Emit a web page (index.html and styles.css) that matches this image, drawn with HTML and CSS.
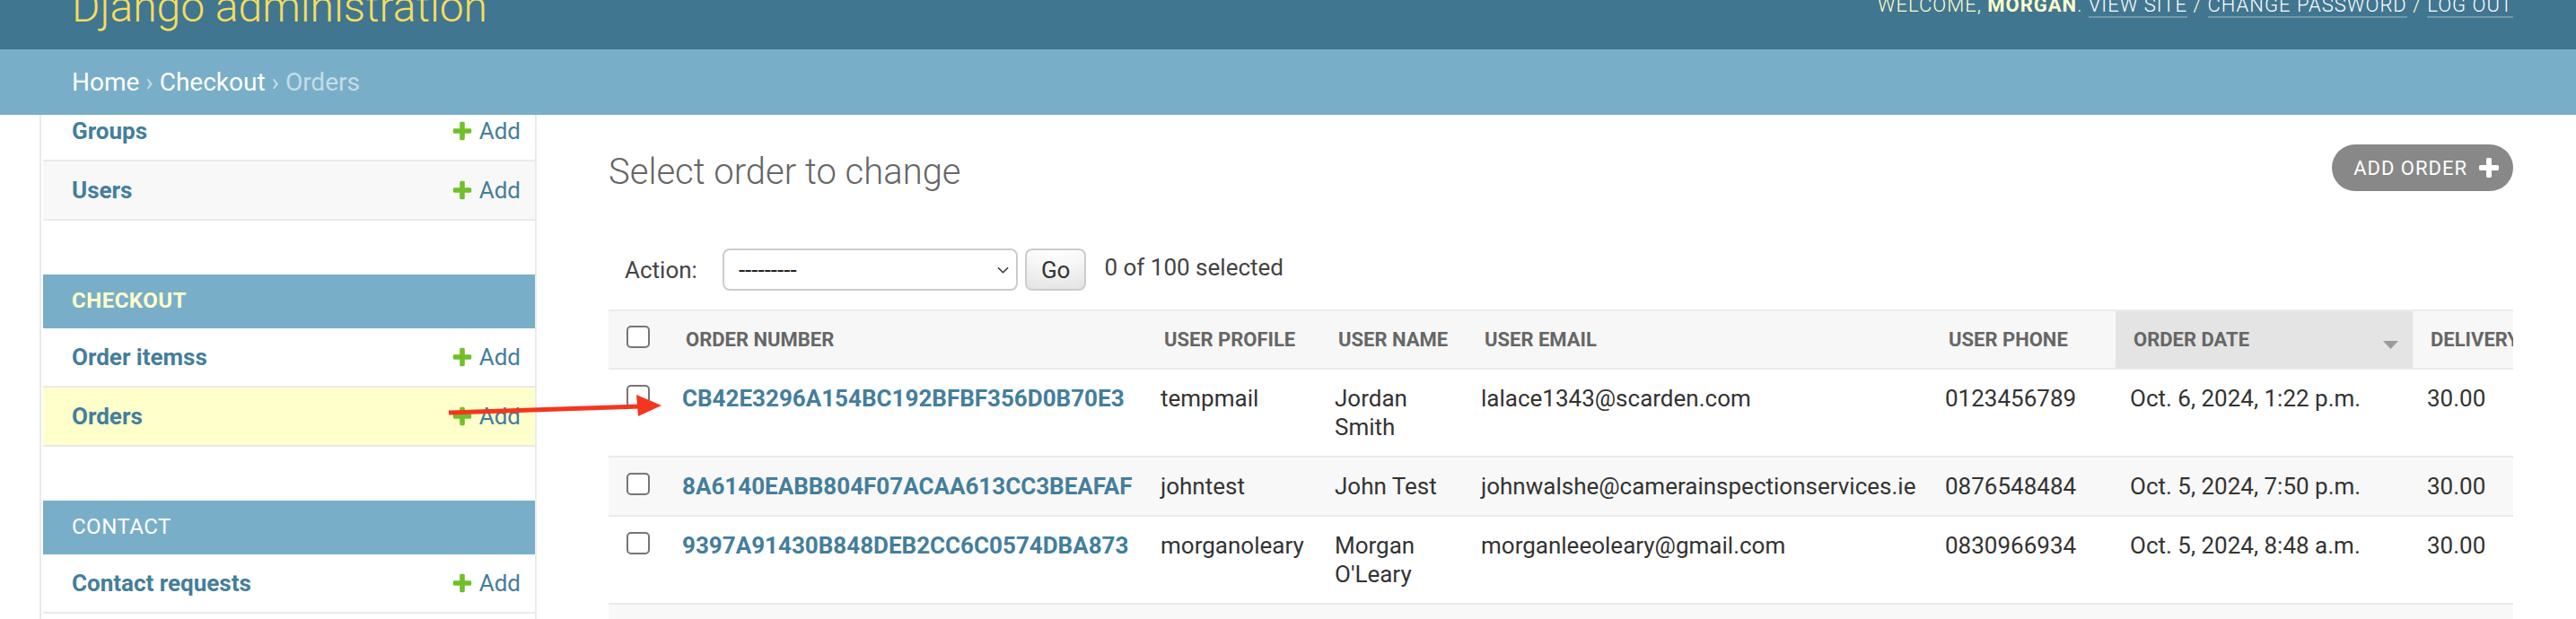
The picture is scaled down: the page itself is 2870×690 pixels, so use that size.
FILE: index.html
```html
<!DOCTYPE html>
<html lang="en">
<head>
<meta charset="utf-8">
<title>Select order to change | Django site admin</title>
<link rel="stylesheet" href="styles.css">
</head>
<body>
<header class="header">
  <div class="branding"><h1 class="site-name">Django administration</h1></div>
  <div class="user-tools">Welcome, <strong>Morgan</strong>. <a href="#">View site</a> / <a href="#">Change password</a> / <a href="#">Log out</a></div>
</header>
<nav class="breadcrumbs"><a href="#">Home</a> › <a href="#">Checkout</a> › Orders</nav>
<div class="main">
  <button class="toggle-nav" aria-label="Toggle navigation"></button>
  <aside class="nav-sidebar">
    <div class="sidebar-inner">
      <div class="module">
        <div class="row"><a class="model" href="#">Groups</a><a class="addlink" href="#"><svg viewBox="0 0 1792 1792"><path fill="#70bf2b" d="M1600 796v192q0 40-28 68t-68 28h-416v416q0 40-28 68t-68 28h-192q-40 0-68-28t-28-68v-416h-416q-40 0-68-28t-28-68v-192q0-40 28-68t68-28h416v-416q0-40 28-68t68-28h192q40 0 68 28t28 68v416h416q40 0 68 28t28 68z"/></svg>Add</a></div>
        <div class="row even"><a class="model" href="#">Users</a><a class="addlink" href="#"><svg viewBox="0 0 1792 1792"><path fill="#70bf2b" d="M1600 796v192q0 40-28 68t-68 28h-416v416q0 40-28 68t-68 28h-192q-40 0-68-28t-28-68v-416h-416q-40 0-68-28t-28-68v-192q0-40 28-68t68-28h416v-416q0-40 28-68t68-28h192q40 0 68 28t28 68v416h416q40 0 68 28t28 68z"/></svg>Add</a></div>
      </div>
      <div class="module">
        <div class="caption current">Checkout</div>
        <div class="row"><a class="model" href="#">Order itemss</a><a class="addlink" href="#"><svg viewBox="0 0 1792 1792"><path fill="#70bf2b" d="M1600 796v192q0 40-28 68t-68 28h-416v416q0 40-28 68t-68 28h-192q-40 0-68-28t-28-68v-416h-416q-40 0-68-28t-28-68v-192q0-40 28-68t68-28h416v-416q0-40 28-68t68-28h192q40 0 68 28t28 68v416h416q40 0 68 28t28 68z"/></svg>Add</a></div>
        <div class="row current-model"><a class="model" href="#">Orders</a><a class="addlink" href="#"><svg viewBox="0 0 1792 1792"><path fill="#70bf2b" d="M1600 796v192q0 40-28 68t-68 28h-416v416q0 40-28 68t-68 28h-192q-40 0-68-28t-28-68v-416h-416q-40 0-68-28t-28-68v-192q0-40 28-68t68-28h416v-416q0-40 28-68t68-28h192q40 0 68 28t28 68v416h416q40 0 68 28t28 68z"/></svg>Add</a></div>
      </div>
      <div class="module">
        <div class="caption">Contact</div>
        <div class="row"><a class="model" href="#">Contact requests</a><a class="addlink" href="#"><svg viewBox="0 0 1792 1792"><path fill="#70bf2b" d="M1600 796v192q0 40-28 68t-68 28h-416v416q0 40-28 68t-68 28h-192q-40 0-68-28t-28-68v-416h-416q-40 0-68-28t-28-68v-192q0-40 28-68t68-28h416v-416q0-40 28-68t68-28h192q40 0 68 28t28 68v416h416q40 0 68 28t28 68z"/></svg>Add</a></div>
      </div>
    </div>
  </aside>
  <section class="content">
    <div class="content-head">
      <h1 class="page-title">Select order to change</h1>
      <a class="add-btn" href="#">Add order<svg viewBox="192 192 1408 1408"><path fill="#fff" d="M1600 796v192q0 40-28 68t-68 28h-416v416q0 40-28 68t-68 28h-192q-40 0-68-28t-28-68v-416h-416q-40 0-68-28t-28-68v-192q0-40 28-68t68-28h416v-416q0-40 28-68t68-28h192q40 0 68 28t28 68v416h416q40 0 68 28t28 68z"/></svg></a>
    </div>
    <div class="actions">
      <span class="action-label">Action:</span>
      <div class="select"><span>---------</span><svg class="chev" viewBox="0 0 14 8"><polyline points="1,1 7,7 13,1" fill="none" stroke="#333" stroke-width="1.6"/></svg></div>
      <button class="go">Go</button>
      <span class="counter">0 of 100 selected</span>
    </div>
    <div class="results">
      <table>
        <colgroup>
          <col class="c-check"><col class="c-number"><col class="c-profile"><col class="c-name"><col class="c-email"><col class="c-phone"><col class="c-date"><col class="c-delivery">
        </colgroup>
        <thead>
          <tr>
            <th class="check"><span class="cb"></span></th>
            <th>Order number</th>
            <th>User profile</th>
            <th>User name</th>
            <th>User email</th>
            <th>User phone</th>
            <th class="sorted"><div class="th-inner"><span>Order date</span><svg class="sort-arrow" viewBox="0 0 17 9"><polygon points="0,0 17,0 8.5,9" fill="#9a9a9a"/></svg></div></th>
            <th>Delivery cost</th>
          </tr>
        </thead>
        <tbody>
          <tr>
            <td class="check"><span class="cb"></span></td>
            <td class="nowrap"><a class="order-link" href="#">CB42E3296A154BC192BFBF356D0B70E3</a></td>
            <td>tempmail</td>
            <td>Jordan Smith</td>
            <td class="nowrap">lalace1343@scarden.com</td>
            <td class="nowrap">0123456789</td>
            <td class="nowrap">Oct. 6, 2024, 1:22 p.m.</td>
            <td>30.00</td>
          </tr>
          <tr class="even">
            <td class="check"><span class="cb"></span></td>
            <td class="nowrap"><a class="order-link" href="#">8A6140EABB804F07ACAA613CC3BEAFAF</a></td>
            <td>johntest</td>
            <td>John Test</td>
            <td class="nowrap">johnwalshe@camerainspectionservices.ie</td>
            <td class="nowrap">0876548484</td>
            <td class="nowrap">Oct. 5, 2024, 7:50 p.m.</td>
            <td>30.00</td>
          </tr>
          <tr>
            <td class="check"><span class="cb"></span></td>
            <td class="nowrap"><a class="order-link" href="#">9397A91430B848DEB2CC6C0574DBA873</a></td>
            <td>morganoleary</td>
            <td>Morgan O'Leary</td>
            <td class="nowrap">morganleeoleary@gmail.com</td>
            <td class="nowrap">0830966934</td>
            <td class="nowrap">Oct. 5, 2024, 8:48 a.m.</td>
            <td>30.00</td>
          </tr>
          <tr class="even">
            <td class="check"><span class="cb"></span></td>
            <td class="nowrap"><a class="order-link" href="#">5D1F0C2A7E8B4A3C9F6E1D2B3A4C5E6F</a></td>
            <td>tempmail</td>
            <td>Jordan Smith</td>
            <td class="nowrap">lalace1343@scarden.com</td>
            <td class="nowrap">0123456789</td>
            <td class="nowrap">Oct. 4, 2024, 6:12 p.m.</td>
            <td>30.00</td>
          </tr>
        </tbody>
      </table>
    </div>
  </section>
</div>
<svg class="annotation" width="2870" height="690" viewBox="0 0 2870 690">
  <line x1="500" y1="460" x2="714" y2="453" stroke="#f4361e" stroke-width="5"/>
  <polygon points="737,452 709,440 711,464" fill="#f4361e"/>
</svg>
</body>
</html>
```
FILE: styles.css
```css
* { box-sizing: border-box; }
html, body { margin: 0; padding: 0; }
body {
  font-family: Roboto, "Liberation Sans", Arial, sans-serif;
  color: #333;
  background: #fff;
  width: 2870px;
  height: 690px;
  overflow: hidden;
  position: relative;
}
a { text-decoration: none; color: #447e9b; }

/* Header */
.header {
  height: 55px;
  background: #417690;
  color: #ffc;
  display: flex;
  justify-content: space-between;
  align-items: flex-start;
  padding: 0 70px 0 80px;
  overflow: hidden;
}
.site-name {
  margin: -21px 0 0;
  font-size: 48px;
  font-weight: 300;
  line-height: normal;
  color: #f5dd5d;
  white-space: nowrap;
}
.user-tools {
  margin-top: -7px;
  font-size: 22px;
  font-weight: 300;
  letter-spacing: 1px;
  text-transform: uppercase;
  line-height: normal;
  white-space: nowrap;
}
.user-tools strong { font-weight: 700; }
.user-tools a { color: #fff; border-bottom: 2px solid rgba(255,255,255,0.25); }

/* Breadcrumbs */
.breadcrumbs {
  height: 73px;
  background: #79aec8;
  color: #c4dce8;
  padding: 20px 70px 20px 80px;
  font-size: 28px;
  line-height: normal;
  white-space: nowrap;
}
.breadcrumbs a { color: #fff; }

/* Main */
.main { display: flex; height: 562px; overflow: hidden; }
.toggle-nav {
  flex: 0 0 46px;
  border: 0;
  border-right: 2px solid #eaeaea;
  background: #fff;
  padding: 0;
}
.nav-sidebar {
  flex: 0 0 552px;
  border-right: 2px solid #eaeaea;
  padding-left: 2px;
  overflow: hidden;
}
.sidebar-inner { margin-top: -14px; }
.module { margin-bottom: 60px; }
.caption {
  height: 60px;
  padding: 15px 16px 17px 32px;
  font-size: 24px;
  line-height: 28px;
  background: #79aec8;
  color: #fff;
  text-transform: uppercase;
  letter-spacing: 0.5px;
}
.caption.current { color: #ffc; font-weight: 700; }
.row {
  display: flex;
  justify-content: space-between;
  align-items: center;
  padding: 16px 16px 16px 32px;
  font-size: 26px;
  line-height: 32px;
  border-bottom: 2px solid #eaeaea;
  background: #fff;
}
.row.even { background: #f8f8f8; }
.row.current-model { background: #ffc; }
.row .model { font-weight: 700; color: #447e9b; }
.addlink { display: flex; align-items: center; color: #447e9b; }
.addlink svg { width: 26px; height: 26px; margin-right: 6px; }

/* Content */
.content { flex: 1; min-width: 0; padding: 40px 70px 0 80px; }
.content-head { display: flex; justify-content: space-between; align-items: flex-start; }
.page-title {
  margin: 0 0 40px;
  font-size: 40px;
  font-weight: 300;
  line-height: normal;
  color: #666;
}
.add-btn {
  margin-top: -7px;
  display: inline-flex;
  align-items: center;
  height: 52px;
  padding: 0 16px 0 24px;
  border-radius: 26px;
  background: #888;
  color: #fff;
  font-size: 22px;
  letter-spacing: 1px;
  text-transform: uppercase;
  line-height: normal;
}
.add-btn svg { width: 22px; height: 22px; margin-left: 13px; }

.actions {
  display: flex;
  align-items: center;
  padding: 22px 18px 21px;
  font-size: 26px;
  color: #444;
}
.action-label { margin-right: 28px; }
.select {
  width: 329px;
  height: 47px;
  border: 2px solid #ccc;
  border-radius: 8px;
  display: flex;
  align-items: center;
  justify-content: space-between;
  padding: 0 8px 0 16px;
  background: #fff;
  color: #222;
}
.chev { width: 13px; height: 8px; }
.go {
  margin-left: 8px;
  height: 47px;
  padding: 0 16px;
  border: 2px solid #ccc;
  border-radius: 8px;
  background: #fff;
  box-shadow: inset 0 -30px 40px -20px rgba(0,0,0,0.15);
  font: inherit;
  color: #333;
}
.counter { margin-left: 20px; margin-bottom: 6px; }

/* Results table */
.results { overflow: hidden; width: 100%; }
.results table {
  border-collapse: separate;
  border-spacing: 0;
  table-layout: fixed;
  width: 2260px;
  font-size: 26px;
  line-height: 32px;
}
.c-check { width: 66px; }
.c-number { width: 533px; }
.c-profile { width: 194px; }
.c-name { width: 163px; }
.c-email { width: 517px; }
.c-phone { width: 206px; }
.c-date { width: 331px; }
.c-delivery { width: 250px; }

.results th {
  padding: 16px 20px 15px;
  background: #f7f7f7;
  border-top: 2px solid #eaeaea;
  border-bottom: 2px solid #eaeaea;
  font-size: 22px;
  font-weight: 700;
  color: #666;
  text-transform: uppercase;
  text-align: left;
  white-space: nowrap;
  vertical-align: top;
}
.results th.sorted { background: #e4e4e4; padding-right: 16px; }
.th-inner { display: flex; justify-content: space-between; align-items: flex-start; }
.sort-arrow { width: 17px; height: 9px; margin-top: 17px; }
.results th.check { padding: 16px 0 15px; }

.results td {
  padding: 16px;
  vertical-align: top;
  border-bottom: 2px solid #eaeaea;
  color: #333;
}
.results tr.even td { background: #f8f8f8; }
.results td.check { padding: 17px 0 0; }
.nowrap { white-space: nowrap; }
.order-link { font-weight: 700; color: #447e9b; }

.cb {
  display: block;
  width: 26px;
  height: 25px;
  margin: 0 auto;
  border: 2px solid #767676;
  border-radius: 5px;
  background: #fff;
}

.annotation { position: absolute; left: 0; top: 0; pointer-events: none; }
```
